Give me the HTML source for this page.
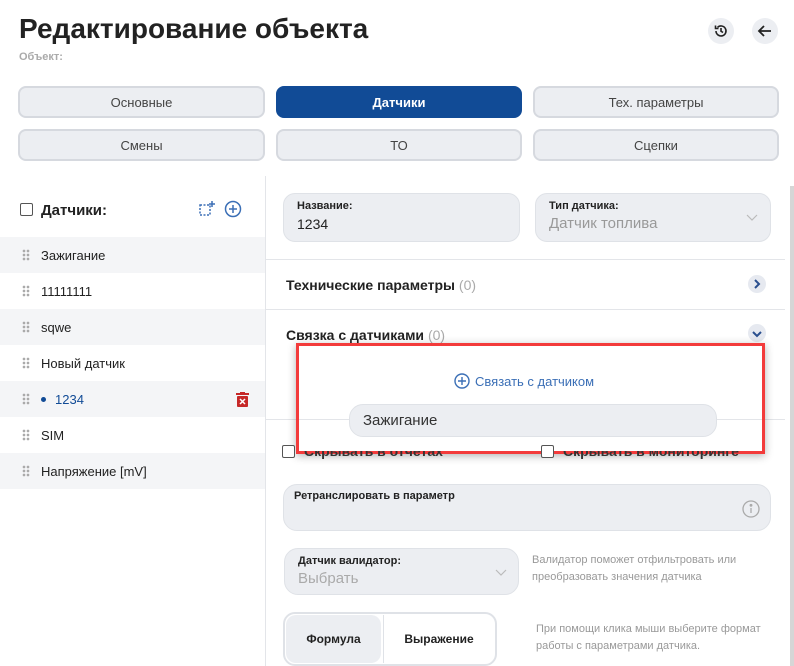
<!DOCTYPE html>
<html><head><meta charset="utf-8"><style>
*{box-sizing:border-box;margin:0;padding:0}
body{width:794px;height:666px;overflow:hidden;background:#fff;font-family:"Liberation Sans",sans-serif;color:#222;position:relative}
.a{position:absolute}
.tab{position:absolute;height:32px;border-radius:8px;background:#eceef2;border:2px solid #d6d9df;font-size:13px;color:#444;display:flex;align-items:center;justify-content:center}
.row{position:absolute;left:0;width:265px;height:36px;font-size:13px;color:#222;display:flex;align-items:center;padding-left:41px}
.row.g{background:#f4f5f7}
.dots{position:absolute;left:22px;top:12px;width:8px;height:12px;background:radial-gradient(circle,#aaa 1.2px,transparent 1.5px) 0 0/4px 4px}
.box{position:absolute;background:#eceef2;border:1px solid #dfe2e7;border-radius:12px}
.lbl{font-size:11px;font-weight:bold;color:#222}
.hr{position:absolute;left:266px;width:519px;height:1px;background:#e3e5e9}
.cb{position:absolute;width:13px;height:13px;border:1.5px solid #555;border-radius:2px;background:#fff}
.help{position:absolute;font-size:11px;color:#999;line-height:17px}
</style></head><body>
<div class="a" style="left:19px;top:13px;font-size:28px;font-weight:bold;color:#222">Редактирование объекта</div>
<div class="a" style="left:19px;top:51px;font-size:11px;color:#aaa;font-weight:bold">Объект:</div>
<div class="a" style="left:68px;top:48px;width:212px;height:37px;background:#fff"></div>
<div class="a" style="left:708px;top:18px;width:26px;height:26px;border-radius:50%;background:#eceef2"></div>
<svg class="a" style="left:713px;top:23px" width="16" height="16" viewBox="0 0 16 16" fill="none" stroke="#222" stroke-width="1.6"><path d="M3 8a5 5 0 1 0 1.5-3.6"/><path d="M2.5 2.5v3h3"/><path d="M8 5v3.2l2 1.3"/></svg>
<div class="a" style="left:752px;top:18px;width:26px;height:26px;border-radius:50%;background:#eceef2"></div>
<svg class="a" style="left:756px;top:22px" width="18" height="18" viewBox="0 0 18 18" fill="none" stroke="#222" stroke-width="1.8"><path d="M15 9H3M8 4L3 9l5 5"/></svg>
<div class="tab" style="left:18px;top:86px;width:247px">Основные</div>
<div class="tab" style="left:276px;top:86px;width:246px;background:#114b96;border-color:#114b96;color:#fff;font-weight:bold">Датчики</div>
<div class="tab" style="left:533px;top:86px;width:246px">Тех. параметры</div>
<div class="tab" style="left:18px;top:129px;width:247px">Смены</div>
<div class="tab" style="left:276px;top:129px;width:246px">ТО</div>
<div class="tab" style="left:533px;top:129px;width:246px">Сцепки</div>
<div class="a" style="left:265px;top:176px;width:1px;height:490px;background:#e3e5e9"></div>
<div class="a" style="left:790px;top:186px;width:4px;height:480px;background:#d6d6d6"></div>
<div class="cb" style="left:20px;top:203px"></div>
<div class="a" style="left:41px;top:202px;font-size:15px;font-weight:bold">Датчики:</div>
<svg class="a" style="left:198px;top:200px" width="18" height="18" viewBox="0 0 18 18" fill="none" stroke="#3b6fb6" stroke-width="1.5"><rect x="2" y="5" width="10" height="10" stroke-dasharray="2 1.5"/><path d="M14 1v6M11 4h6"/></svg>
<svg class="a" style="left:224px;top:200px" width="18" height="18" viewBox="0 0 18 18" fill="none" stroke="#3b6fb6" stroke-width="1.5"><circle cx="9" cy="9" r="7.5"/><path d="M9 5v8M5 9h8"/></svg>
<div class="row g" style="top:237px"><i class="dots"></i>Зажигание</div>
<div class="row" style="top:273px"><i class="dots"></i>11111111</div>
<div class="row g" style="top:309px"><i class="dots"></i>sqwe</div>
<div class="row" style="top:345px"><i class="dots"></i>Новый датчик</div>
<div class="row g" style="top:381px;color:#114b96"><i class="dots"></i><span style="width:5px;height:5px;border-radius:50%;background:#114b96;margin-right:9px"></span>1234
<svg class="a" style="left:236px;top:11px" width="13" height="15" viewBox="0 0 13 15"><rect x="0" y="1" width="13" height="2" fill="#c62828"/><rect x="4" y="0" width="5" height="2" fill="#c62828"/><rect x="1" y="4" width="11" height="11" rx="1" fill="#c62828"/><path d="M4 7l5 5M9 7l-5 5" stroke="#fff" stroke-width="1.5"/></svg></div>
<div class="row" style="top:417px"><i class="dots"></i>SIM</div>
<div class="row g" style="top:453px"><i class="dots"></i>Напряжение [mV]</div>

<div class="box" style="left:283px;top:193px;width:237px;height:49px;padding:6px 13px"><div class="lbl">Название:</div><div style="font-size:14px;margin-top:4px">1234</div></div>
<div class="box" style="left:535px;top:193px;width:236px;height:49px;padding:6px 13px"><div class="lbl">Тип датчика:</div><div style="font-size:15px;color:#999;margin-top:3px">Датчик топлива</div>
<svg class="a" style="left:210px;top:20px" width="12" height="8" viewBox="0 0 12 8" fill="none" stroke="#bbb" stroke-width="1.2"><path d="M1 1l5 5 5-5"/></svg></div>
<div class="hr" style="top:259px"></div>
<div class="a" style="left:286px;top:277px;font-size:14px;font-weight:bold">Технические параметры <span style="color:#aaa;font-weight:normal">(0)</span></div>
<div class="a" style="left:748px;top:275px;width:18px;height:18px;border-radius:50%;background:#e6e9f0"></div>
<svg class="a" style="left:753px;top:279px" width="8" height="10" viewBox="0 0 8 10" fill="none" stroke="#2a4f8f" stroke-width="2"><path d="M2 1l4 4-4 4"/></svg>
<div class="hr" style="top:309px"></div>
<div class="a" style="left:286px;top:327px;font-size:14px;font-weight:bold">Связка с датчиками <span style="color:#aaa;font-weight:normal">(0)</span></div>
<div class="a" style="left:748px;top:324px;width:18px;height:18px;border-radius:50%;background:#e6e9f0"></div>
<svg class="a" style="left:752px;top:330px" width="10" height="8" viewBox="0 0 10 8" fill="none" stroke="#2a4f8f" stroke-width="2"><path d="M1 2l4 4 4-4"/></svg>
<div class="hr" style="top:419px"></div>
<div class="a" style="left:296px;top:343px;width:469px;height:111px;border:3px solid #f33b3b;box-shadow:0 2px 8px rgba(0,0,0,.3)"></div>
<svg class="a" style="left:454px;top:373px" width="16" height="16" viewBox="0 0 16 16" fill="none" stroke="#3b6fb6" stroke-width="1.4"><circle cx="8" cy="8" r="7"/><path d="M8 4v8M4 8h8"/></svg>
<div class="a" style="left:475px;top:374px;font-size:13px;color:#3b6fb6">Связать с датчиком</div>
<div class="a" style="left:349px;top:404px;width:368px;height:33px;border-radius:14px;background:#eceef2;border:1px solid #dfe2e7;font-size:15px;color:#333;padding:7px 13px">Зажигание</div>
<div class="cb" style="left:282px;top:445px"></div>
<div class="a" style="left:304px;top:443px;font-size:14px;font-weight:bold;color:#333;clip-path:inset(8px 0 0 0)">Скрывать в отчетах</div>
<div class="cb" style="left:541px;top:445px"></div>
<div class="a" style="left:563px;top:443px;font-size:14px;font-weight:bold;color:#333;clip-path:inset(8px 0 0 0)">Скрывать в мониторинге</div>
<div class="box" style="left:283px;top:484px;width:488px;height:47px;padding:5px 10px;border-radius:14px"><div class="lbl">Ретранслировать в параметр</div>
<svg class="a" style="left:458px;top:15px" width="18" height="18" viewBox="0 0 18 18" fill="none" stroke="#aaa" stroke-width="1.3"><circle cx="9" cy="9" r="8"/><path d="M9 8v5"/><circle cx="9" cy="5.3" r=".8" fill="#aaa"/></svg></div>
<div class="box" style="left:284px;top:548px;width:235px;height:47px;padding:6px 13px;border-radius:14px"><div class="lbl">Датчик валидатор:</div><div style="font-size:15px;color:#aaa;margin-top:3px">Выбрать</div>
<svg class="a" style="left:210px;top:20px" width="12" height="8" viewBox="0 0 12 8" fill="none" stroke="#bbb" stroke-width="1.2"><path d="M1 1l5 5 5-5"/></svg></div>
<div class="help" style="left:532px;top:552px">Валидатор поможет отфильтровать или<br>преобразовать значения датчика</div>
<div class="a" style="left:283px;top:612px;width:214px;height:54px;border:2px solid #dfe2e7;border-radius:12px;background:#fff"></div>
<div class="a" style="left:286px;top:615px;width:95px;height:48px;border-radius:10px;background:#eceef2;font-size:12px;font-weight:bold;display:flex;align-items:center;justify-content:center">Формула</div>
<div class="a" style="left:383px;top:615px;width:111px;height:48px;font-size:12px;font-weight:bold;display:flex;align-items:center;justify-content:center;border-left:1px solid #dfe2e7">Выражение</div>
<div class="help" style="left:536px;top:621px">При помощи клика мыши выберите формат<br>работы с параметрами датчика.</div>
</body></html>
